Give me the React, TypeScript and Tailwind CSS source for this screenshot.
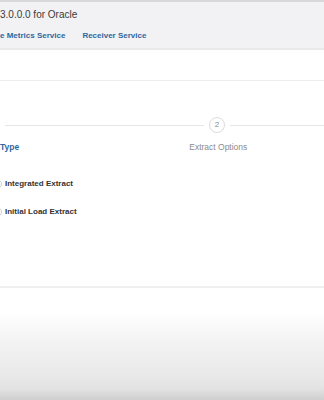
import React from "react";

export default function App() {
  return (
    <div className="w-[324px] h-[400px] overflow-hidden bg-white font-['Liberation_Sans',Arial,sans-serif] flex flex-col">
      <div className="h-[2px] bg-[#d9d9dd] shrink-0" />
      <div className="h-[46px] bg-[#f2f2f4] shrink-0 flex flex-col">
        <div className="pt-[6px] text-[10px] leading-[13px] text-[#3a3a3a] whitespace-nowrap">3.0.0.0 for Oracle</div>
        <div className="mt-[9px] flex gap-[17px] text-[8px] leading-[12px] font-bold text-[#2f679f] whitespace-nowrap">
          <span>e Metrics Service</span>
          <span>Receiver Service</span>
        </div>
      </div>
      <div className="h-[2px] bg-[#e9e9eb] shrink-0" />
      <div className="h-[30px] bg-white shrink-0" />
      <div className="h-[1px] bg-[#eeeeee] shrink-0" />
      <div className="h-[205px] bg-white shrink-0 flex flex-col">
        <div className="mt-[36px] flex items-center h-[16px]">
          <div className="ml-[5px] w-[199px] h-[1px] bg-[#e6e6e6]" />
          <div className="ml-[5px] w-[16px] h-[16px] rounded-full border border-[#dcdcdc] flex items-center justify-center text-[8px] text-[#8a8a8a]">2</div>
          <div className="ml-[5px] flex-1 h-[1px] bg-[#e6e6e6]" />
        </div>
        <div className="mt-[8px] flex text-[8.5px] leading-[12px] whitespace-nowrap">
          <span className="text-[#2f679f] font-bold">Type</span>
          <span className="ml-[170px] text-[#8c8c8c]">Extract Options</span>
        </div>
        <div className="mt-[25px] flex items-center gap-[3px] text-[8px] leading-[12px] text-[#333] font-bold whitespace-nowrap">
          <div className="-ml-[8px] w-[10px] h-[10px] rounded-full border border-[#cfcfcf] bg-white shrink-0" />
          <span>Integrated Extract</span>
        </div>
        <div className="mt-[16px] flex items-center gap-[3px] text-[8px] leading-[12px] text-[#333] font-bold whitespace-nowrap">
          <div className="-ml-[8px] w-[10px] h-[10px] rounded-full border border-[#cfcfcf] bg-white shrink-0" />
          <span>Initial Load Extract</span>
        </div>
      </div>
      <div className="h-[2px] bg-[#efefef] shrink-0" />
      <div className="flex-1 bg-[linear-gradient(to_bottom,#ffffff_0%,#ffffff_22%,#f4f4f4_45%,#e8e8e8_80%,#e2e2e2_90%,#cfcfcf_100%)]" />
    </div>
  );
}
